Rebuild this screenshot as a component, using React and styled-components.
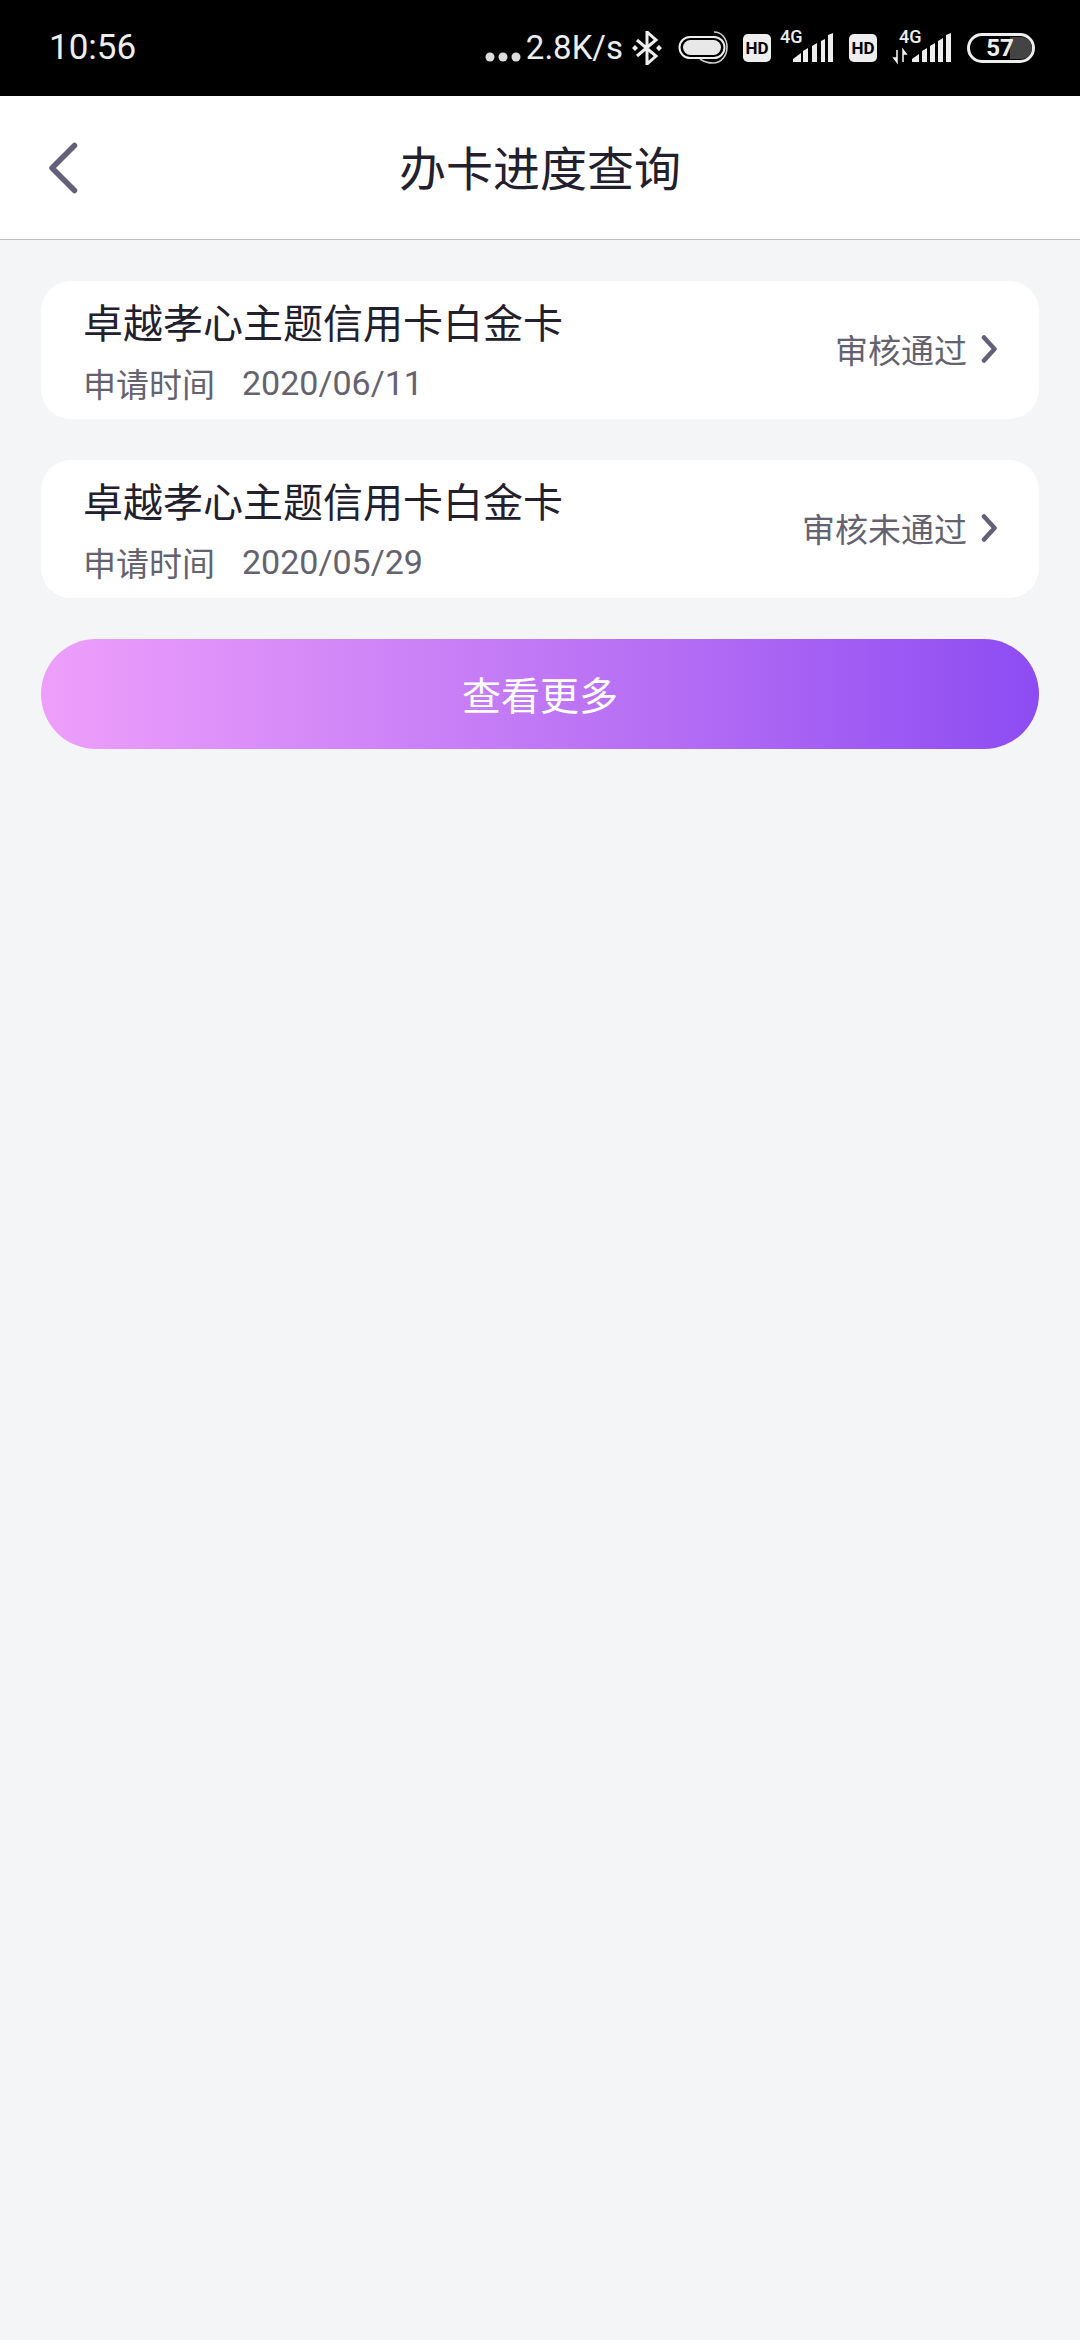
import React from 'react';
import styled, { createGlobalStyle } from 'styled-components';

const GlobalStyle = createGlobalStyle`
  html, body {
    margin: 0;
    padding: 0;
    background: #f4f5f7;
  }
  * { box-sizing: border-box; }
`;

const CJK = `"Noto Sans CJK SC", Roboto, sans-serif`;

const Page = styled.div`
  width: 1080px;
  height: 2340px;
  background: #f4f5f7;
  font-family: ${CJK};
  overflow: hidden;
`;

const StatusBar = styled.div`
  height: 96px;
  background: #000;
  color: #eee;
  display: flex;
  align-items: center;
  padding: 0 45px 0 49px;
  font-family: Roboto, sans-serif;
`;

const Time = styled.div`
  font-size: 35px;
  line-height: 96px;
  flex: 1;
`;

const Speed = styled.div`
  font-size: 33px;
  line-height: 96px;
  margin: 0 9px 0 5px;
`;

const Icon = styled.svg`
  display: block;
  flex: none;
  margin-left: ${p => p.$left || 0}px;
  margin-top: ${p => p.$top || 0}px;
`;

const Header = styled.div`
  height: 144px;
  background: #fff;
  border-bottom: 1px solid #bfbfc3;
  display: flex;
  align-items: center;
  justify-content: center;
  position: relative;
`;

const BackIcon = styled.svg`
  position: absolute;
  left: 47px;
  top: 45px;
`;

const Title = styled.div`
  font-size: 47px;
  line-height: 60px;
  color: #23202e;
  margin-bottom: 3px;
`;

const Content = styled.div`
  padding: 41px 41px 0;
  display: flex;
  flex-direction: column;
  gap: 41px;
`;

const Card = styled.div`
  height: 138px;
  background: #fff;
  border-radius: 30px;
  padding: 0 42px 0 42px;
  display: flex;
  align-items: center;
  justify-content: space-between;
`;

const CardText = styled.div`
  display: flex;
  flex-direction: column;
`;

const CardTitle = styled.div`
  font-size: 40px;
  line-height: 56px;
  color: #23202e;
  margin-top: -2px;
`;

const CardMeta = styled.div`
  font-size: 33px;
  line-height: 44px;
  color: #65626f;
  margin-top: 12px;
  display: flex;
  gap: 27px;
`;

const MetaLabel = styled.span`
  font-family: ${CJK};
`;

const MetaDate = styled.span`
  font-family: Roboto, sans-serif;
  font-size: 34px;
`;

const Status = styled.div`
  display: flex;
  align-items: center;
  gap: 14px;
  font-size: 33px;
  line-height: 44px;
  color: #65626f;
  margin-top: -2px;
`;

const MoreButton = styled.button`
  height: 110px;
  border: none;
  border-radius: 55px;
  padding: 0 0 2px;
  background: linear-gradient(90deg, #ee9ffb 0%, #b56ef4 62%, #8d4cf3 100%);
  color: #fff;
  font-family: ${CJK};
  font-size: 39px;
`;

const Signal = ({ left, arrows }) => (
  <Icon $left={left} width="62" height="42" viewBox="0 0 62 42">
    <text x={arrows ? 9 : 5} y="16" fill="#eee" fontSize="18" fontWeight="500" fontFamily="Roboto, sans-serif">4G</text>
    {arrows && <path d="M7 23v12l-3-4h3zM13 35V23l3 4h-3z" stroke="#eee" strokeWidth="1.6" fill="#eee" />}
    <path
      d={arrows
        ? 'M22 35v-3l7-5v8zM32 35V24l5-3v14zM40 35V19l5-3v19zM48 35V14l5-3v24zM56 35V8l5-2v29z'
        : 'M18 35v-3l8-6v9zM28 35V24l5-3v14zM37 35V19l5-3v19zM46 35V14l4-2v23zM53 35V8l5-2v29z'}
      fill="#eee"
    />
  </Icon>
);

const HdBadge = ({ left }) => (
  <Icon $left={left} width="28" height="28" viewBox="0 0 28 28">
    <rect width="28" height="28" rx="5" fill="#eee" />
    <text x="14" y="20" textAnchor="middle" fill="#000" fontSize="17" fontWeight="700" fontFamily="Roboto, sans-serif">HD</text>
  </Icon>
);

const applications = [
  { id: 1, date: '2020/06/11', status: '审核通过' },
  { id: 2, date: '2020/05/29', status: '审核未通过' },
];

export default function App() {
  return (
    <Page>
      <GlobalStyle />
      <StatusBar>
        <Time>10:56</Time>
        <Icon $top={18} width="36" height="12" viewBox="0 0 36 12">
          <circle cx="5" cy="6" r="4.5" fill="#ddd" />
          <circle cx="18" cy="6" r="4.5" fill="#ddd" />
          <circle cx="31" cy="6" r="4.5" fill="#ddd" />
        </Icon>
        <Speed>2.8K/s</Speed>
        <Icon width="30" height="34" viewBox="0 0 30 34">
          <path d="M5 9l19 16-9 8V1l9 8L5 25" stroke="#eee" strokeWidth="3" fill="none" />
          <path d="M3 14l-3 3 3 3 3-3zM27 14l-3 3 3 3 3-3z" fill="#eee" />
        </Icon>
        <Icon $left={16} width="50" height="36" viewBox="0 0 50 36">
          <rect x="1.5" y="7" width="45" height="21" rx="10.5" fill="none" stroke="#eee" strokeWidth="2" />
          <rect x="5" y="10" width="38" height="15" rx="7.5" fill="#e8e8e8" />
          <path d="M36 2c8 0 13 7 13 15s-5 16-14 16c-6 0-9-1-13-4" fill="none" stroke="#ccc" strokeWidth="1.6" />
        </Icon>
        <HdBadge left={15} />
        <Signal left={4} />
        <HdBadge left={12} />
        <Signal left={13} arrows />
        <Icon $left={15} width="68" height="30" viewBox="0 0 68 30">
          <rect x="1.5" y="1.5" width="65" height="27" rx="13.5" fill="#000" stroke="#eee" strokeWidth="3" />
          <path d="M43 4h11a11 11 0 0 1 0 22H43z" fill="#444" />
          <text x="33" y="23" textAnchor="middle" fill="#eee" fontSize="24" fontWeight="700" fontFamily="Roboto, sans-serif">57</text>
        </Icon>
      </StatusBar>

      <Header>
        <BackIcon width="34" height="54" viewBox="0 0 34 54">
          <path d="M27.5 4.5L5 27l22.5 22.5" fill="none" stroke="#65607a" strokeWidth="5.5" strokeLinecap="round" strokeLinejoin="round" />
        </BackIcon>
        <Title>办卡进度查询</Title>
      </Header>

      <Content>
        {applications.map(item => (
          <Card key={item.id}>
            <CardText>
              <CardTitle>卓越孝心主题信用卡白金卡</CardTitle>
              <CardMeta>
                <MetaLabel>申请时间</MetaLabel>
                <MetaDate>{item.date}</MetaDate>
              </CardMeta>
            </CardText>
            <Status>
              {item.status}
              <svg width="16" height="28" viewBox="0 0 16 28">
                <path d="M3 2.5L13.5 14 3 25.5" fill="none" stroke="#65607a" strokeWidth="4.5" strokeLinecap="round" strokeLinejoin="round" />
              </svg>
            </Status>
          </Card>
        ))}
        <MoreButton>查看更多</MoreButton>
      </Content>
    </Page>
  );
}
